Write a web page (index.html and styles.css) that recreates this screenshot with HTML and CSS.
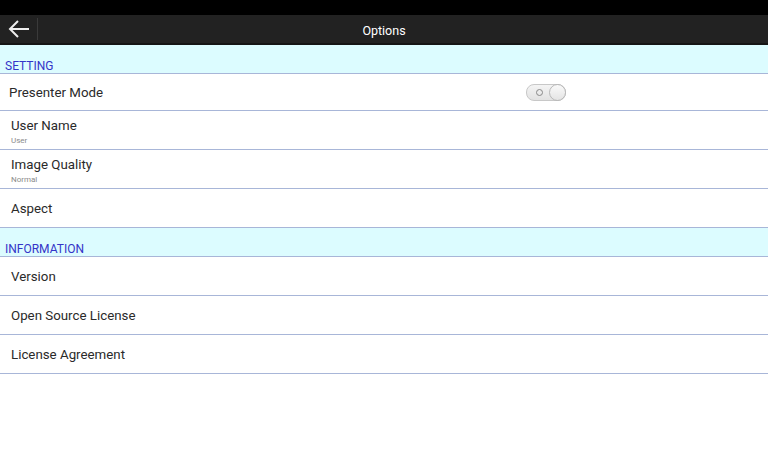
FILE: index.html
```html
<!DOCTYPE html>
<html>
<head>
<meta charset="utf-8">
<link rel="stylesheet" href="styles.css">
</head>
<body>
<div class="status"></div>
<div class="toolbar">
  <div class="back">
    <svg width="22" height="18" viewBox="0 0 22 18"><path d="M21 9H2M10 1L2 9l8 8" fill="none" stroke="#eee" stroke-width="2"/></svg>
  </div>
  <div class="divider"></div>
  <div class="title">Options</div>
</div>
<div class="section">SETTING</div>
<div class="row row-short">
  <span class="label presenter">Presenter Mode</span>
  <div class="toggle"><span class="ring"></span><span class="knob"></span></div>
</div>
<div class="row two"><div class="label">User Name</div><div class="sub">User</div></div>
<div class="row two"><div class="label">Image Quality</div><div class="sub">Normal</div></div>
<div class="row"><div class="label">Aspect</div></div>
<div class="section">INFORMATION</div>
<div class="row"><div class="label">Version</div></div>
<div class="row"><div class="label">Open Source License</div></div>
<div class="row"><div class="label">License Agreement</div></div>
</body>
</html>
```
FILE: styles.css
```css
html, body { margin: 0; padding: 0; background: #fff; font-family: Roboto, "Liberation Sans", sans-serif; }
.status { height: 15px; background: #000; }
.toolbar { height: 28px; background: #222222; border-bottom: 2px solid #151515; display: flex; align-items: center; position: relative; }
.back { width: 36px; display: flex; justify-content: center; align-items: center; padding-left: 1px; }
.back svg { display: block; }
.divider { width: 1px; height: 22px; background: #3a3a3a; }
.title { position: absolute; left: 0; right: 0; text-align: center; color: #fff; font-size: 12.5px; top: 8px; }
.section { height: 29px; background: #dcfcff; color: #3434c8; font-size: 12px; box-sizing: border-box; padding: 14px 0 0 5px; border-bottom: 1px solid #a8b6d8; }
.row { height: 39px; box-sizing: border-box; border-bottom: 1px solid #a8b6d8; display: flex; flex-direction: column; justify-content: center; padding-left: 11px; padding-top: 1px; }
.row.two { padding-top: 3px; }
.row-short { height: 37px; flex-direction: row; justify-content: flex-start; align-items: center; padding-left: 9px; }
.label { font-size: 13.3px; color: #2a2a2a; }
.presenter { width: 517px; flex: none; }
.sub { font-size: 8px; color: #8a8a8a; margin-top: 3px; }
.toggle { width: 38px; height: 15px; border-radius: 8px; background: linear-gradient(#f4f4f4, #e2e2e2); border: 1px solid #c8c8c8; position: relative; }
.ring { position: absolute; left: 9px; top: 4px; width: 5px; height: 5px; border: 1px solid #888; border-radius: 50%; }
.knob { position: absolute; right: -1px; top: -1px; width: 17px; height: 17px; border-radius: 50%; background: linear-gradient(#fafafa, #e4e4e4); border: 1px solid #b8b8b8; box-sizing: border-box; }
```
